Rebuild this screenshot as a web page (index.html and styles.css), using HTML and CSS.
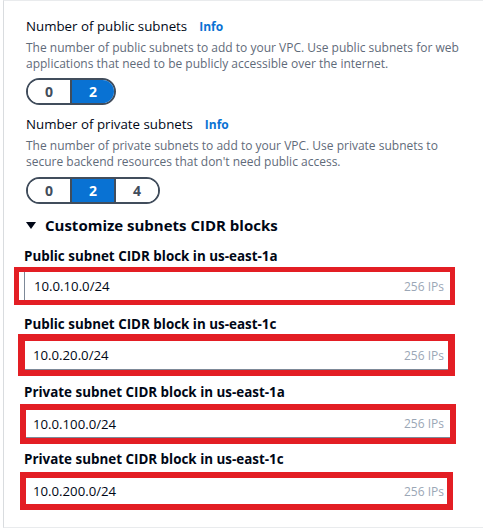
FILE: index.html
```html
<!DOCTYPE html>
<html>
<head>
<meta charset="utf-8">
<link rel="stylesheet" href="styles.css">
</head>
<body>
<div class="panel">
  <div class="field">
    <div class="title">Number of public subnets <a class="info">Info</a></div>
    <div class="desc">The number of public subnets to add to your VPC. Use public subnets for web applications that need to be publicly accessible over the internet.</div>
    <div class="seg">
      <span class="opt">0</span><span class="opt on">2</span>
    </div>
  </div>
  <div class="field f2">
    <div class="title">Number of private subnets <a class="info">Info</a></div>
    <div class="desc">The number of private subnets to add to your VPC. Use private subnets to secure backend resources that don't need public access.</div>
    <div class="seg s2">
      <span class="opt">0</span><span class="opt on">2</span><span class="opt">4</span>
    </div>
  </div>
  <div class="expander"><span class="caret"></span>Customize subnets CIDR blocks</div>
  <div class="cidr">
    <div class="label l1">Public subnet CIDR block in us-east-1a</div>
    <div class="hl hl1"><div class="input bl"><span class="val">10.0.10.0/24</span><span class="ips">256 IPs</span></div></div>
    <div class="label l2">Public subnet CIDR block in us-east-1c</div>
    <div class="hl hl2"><div class="input bb"><span class="val">10.0.20.0/24</span><span class="ips">256 IPs</span></div></div>
    <div class="label l3">Private subnet CIDR block in us-east-1a</div>
    <div class="hl hl3"><div class="input bb"><span class="val">10.0.100.0/24</span><span class="ips">256 IPs</span></div></div>
    <div class="label l4">Private subnet CIDR block in us-east-1c</div>
    <div class="hl hl4"><div class="input"><span class="val">10.0.200.0/24</span><span class="ips">256 IPs</span></div></div>
  </div>
</div>
</body>
</html>
```
FILE: styles.css
```css
html, body { margin: 0; padding: 0; background: #fff; }
body {
  font-family: "Open Sans", "Noto Sans", sans-serif;
  color: #000716;
  width: 483px;
  height: 532px;
  overflow: hidden;
}
.panel {
  margin-left: 3px;
  border-left: 1px solid #d9dcdf;
  border-top: 1px solid #e9ebed;
  border-bottom: 1px solid #e9ebed;
  height: 528px;
  box-sizing: border-box;
  padding: 15px 0 0 22px;
}
.title {
  font-size: 13.3px;
  line-height: 20px;
  display: flex;
  align-items: baseline;
  gap: 12px;
}
.info {
  color: #0972d3;
  font-size: 12px;
  font-weight: 700;
}
.desc {
  font-size: 12px;
  line-height: 16px;
  color: #5f6b7a;
  width: 440px;
  margin-top: 3px;
}
.seg {
  display: flex;
  width: max-content;
  margin-top: 6px;
  border: 2px solid #414d5c;
  border-radius: 14px;
  overflow: hidden;
  height: 23px;
}
.s2 { margin-top: 7px; }
.opt {
  width: 42px;
  text-align: center;
  font-size: 14px;
  font-weight: 700;
  line-height: 23px;
  color: #414d5c;
  background: #fff;
}
.opt + .opt { border-left: 2px solid #414d5c; }
.opt.on { background: #0972d3; color: #fff; }
.f2 { margin-top: 9px; }
.expander {
  margin-top: 10px;
  font-size: 15px;
  font-weight: 700;
  line-height: 22px;
  display: flex;
  align-items: center;
}
.caret {
  width: 0; height: 0;
  border-left: 5px solid transparent;
  border-right: 5px solid transparent;
  border-top: 7px solid #000716;
  margin: 0 9px 0 0;
}
.cidr { margin-left: -2px; }
.label {
  font-size: 13.4px;
  font-weight: 700;
  line-height: 20px;
}
.l1 { margin-top: 10px; }
.l2 { margin-top: 9px; }
.l3 { margin-top: 6px; }
.l4 { margin-top: 5px; }
.hl {
  border: 6px solid #e31e24;
  box-sizing: border-box;
}
.hl1 { margin: 1px 0 0 -10px; width: 441px; height: 38px; border-width: 5px; }
.hl2 { margin: 0 0 0 -6px; width: 437px; height: 42px; border-width: 7px 7px 6px 7px; }
.hl3 { margin: 2px 0 0 -4px; width: 436px; height: 40px; }
.hl4 { margin: 3px 0 0 -4px; width: 433px; height: 38px; }
.input {
  height: 100%;
  box-sizing: border-box;
  display: flex;
  align-items: center;
  justify-content: space-between;
  background: #fff;
}
.hl1 .input { margin-left: 5px; border-left: 1px solid #7d8998; padding: 0 6px 0 9px; }
.hl2 .input { padding: 0 4px 0 8px; }
.hl3 .input { padding: 0 6px 0 7px; }
.hl4 .input { padding: 0 3px 0 7px; }
.input.bb { border-bottom: 1px solid #7d8998; }
.val { font-size: 13.2px; }
.ips { font-size: 12px; color: #9ba7b6; }
```
